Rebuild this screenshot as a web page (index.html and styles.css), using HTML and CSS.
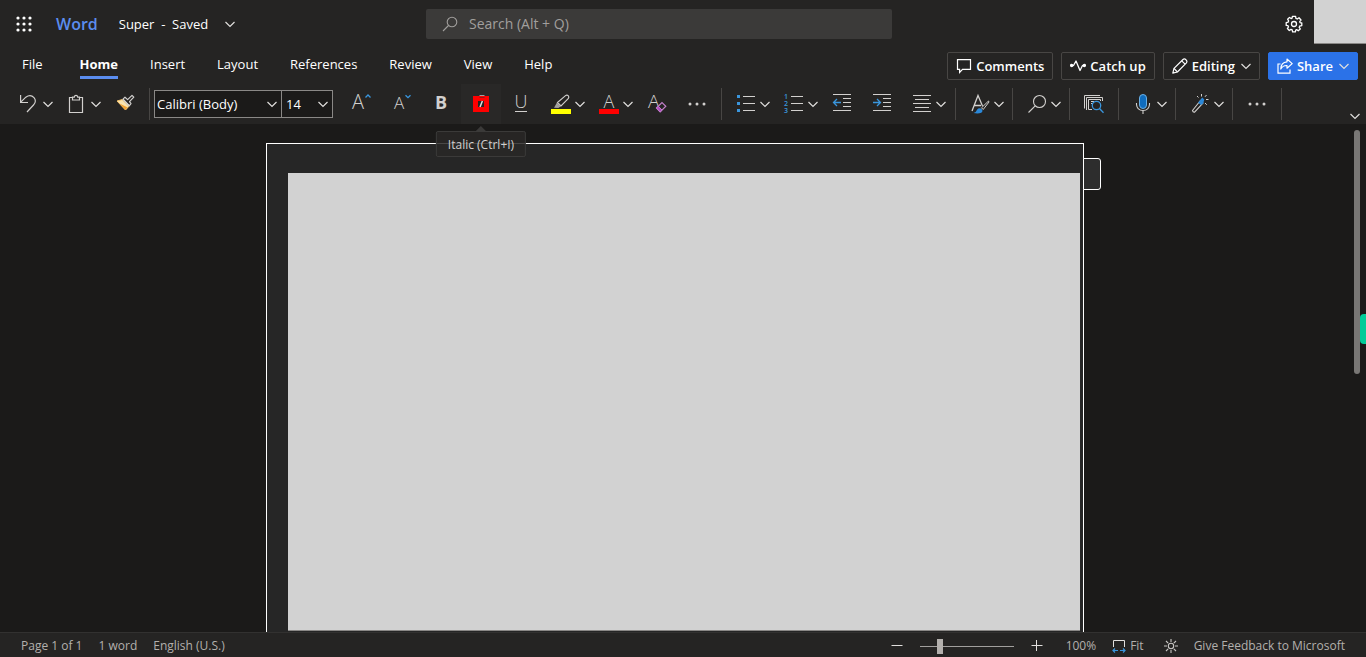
FILE: index.html
```html
<!DOCTYPE html>
<html lang="en">
<head>
<meta charset="utf-8">
<title>Super - Word</title>
<link rel="stylesheet" href="styles.css">
</head>
<body>
<svg class="defs" aria-hidden="true">
  <symbol id="chev" viewBox="0 0 10 10"><path d="M0.5 3L5 7.5L9.5 3" fill="none" stroke="currentColor" stroke-width="1.2"/></symbol>
</svg>
<header class="header">
  <div class="titlebar">
    <div class="title-left">
      <button class="launcher" aria-label="App launcher">
        <svg width="16" height="16" fill="#fff"><circle cx="2" cy="2" r="1.6"/><circle cx="8" cy="2" r="1.6"/><circle cx="14" cy="2" r="1.6"/><circle cx="2" cy="8" r="1.6"/><circle cx="8" cy="8" r="1.6"/><circle cx="14" cy="8" r="1.6"/><circle cx="2" cy="14" r="1.6"/><circle cx="8" cy="14" r="1.6"/><circle cx="14" cy="14" r="1.6"/></svg>
      </button>
      <a class="brand" href="#">Word</a>
      <button class="doc-name"><span>Super&nbsp; -&nbsp; Saved</span><svg class="chev"><use href="#chev"/></svg></button>
    </div>
    <label class="search">
      <svg width="16" height="16" fill="none" stroke="#a19f9d" stroke-width="1.1"><circle cx="10" cy="6" r="4.8"/><path d="M6.5 9.5L1 15"/></svg>
      <input type="text" placeholder="Search (Alt + Q)" aria-label="Search">
    </label>
    <div class="title-right">
      <button class="settings" aria-label="Settings">
        <svg width="18" height="18" viewBox="0 0 18 18" fill="none" stroke="#fff" stroke-width="1.3" stroke-linejoin="round"><circle cx="9" cy="9" r="2.5"/><path d="M7.4 1.3H10.6L10.9 3.4L12.3 4L14 2.8L16 5L14.7 6.6L15 7.6L16.8 8V10.6L14.8 11L14.2 12.3L15.3 13.9L13.2 15.8L11.6 14.6L10.7 15L10.4 16.8H7.6L7.2 14.9L6 14.4L4.3 15.5L2.4 13.5L3.5 11.9L3 10.7L1.2 10.4V7.6L3.1 7.2L3.6 5.9L2.6 4.2L4.5 2.4L6.1 3.6L7.1 3.2Z"/></svg>
      </button>
      <div class="avatar"></div>
    </div>
  </div>
  <div class="tabrow">
    <nav class="tabs">
      <a class="tab tab-file" href="#">File</a>
      <a class="tab active" href="#">Home</a>
      <a class="tab" href="#">Insert</a>
      <a class="tab" href="#">Layout</a>
      <a class="tab" href="#">References</a>
      <a class="tab" href="#">Review</a>
      <a class="tab" href="#">View</a>
      <a class="tab" href="#">Help</a>
    </nav>
    <div class="actions">
      <button class="action"><svg width="16" height="16" fill="none" stroke="#fff" stroke-width="1.2"><path d="M1.5 1.6H14.5V11.4H6.5L3.6 14.4V11.4H1.5Z"/></svg>Comments</button>
      <button class="action"><svg width="16" height="16" fill="none" stroke="#fff" stroke-width="1.3" stroke-linejoin="round"><path d="M1 7.5H3.5L6 3L10 12.5L12.5 7.5H15"/><circle cx="1.6" cy="7.5" r="1" fill="#fff"/><circle cx="14.4" cy="7.5" r="1" fill="#fff"/></svg>Catch up</button>
      <button class="action"><svg width="16" height="16" fill="none" stroke="#fff" stroke-width="1.2" stroke-linejoin="round"><path d="M0.8 15.2L2 10.4L11 1.5Q12.4 0.3 14 1.8Q15.6 3.4 14.4 4.9L5.4 14Z"/><path d="M9.7 2.8L13.1 6.2M2 10.4L5.4 14"/></svg>Editing<svg class="chev"><use href="#chev"/></svg></button>
      <button class="action share"><svg width="16" height="16" fill="none" stroke="#fff" stroke-width="1.2"><path d="M3.5 6H1V15.2H13V11.5"/><path d="M10 1L15.2 5.6L10 10.2V7.5Q6 7.2 3.8 11Q4 4.2 10 3.8Z" stroke-linejoin="round"/></svg>Share<svg class="chev"><use href="#chev"/></svg></button>
    </div>
  </div>
  <div class="toolbar">
    <button class="tool split" aria-label="Undo"><svg class="ico" fill="none" stroke="#d2d0ce" stroke-width="1.2"><path d="M1.6 1V8.5H9M1.8 8.2L6.8 3.2Q11.5 0 15 3.6Q18 7.2 14.5 11L8 18"/></svg><svg class="chev"><use href="#chev"/></svg></button>
    <button class="tool split" aria-label="Paste"><svg class="ico" fill="none" stroke="#d2d0ce" stroke-width="1.2"><path d="M5 3.5H2.5V18.5H15.5V3.5H13M5.5 6V3.2H7.3Q7.5 1.3 9 1.3Q10.5 1.3 10.7 3.2H12.5V6Z"/></svg><svg class="chev"><use href="#chev"/></svg></button>
    <button class="tool" aria-label="Format painter"><svg class="ico" fill="none" stroke-linejoin="round"><path d="M2 7L7.2 5.6L14 12.2L10.5 16Z" fill="#f8e3b0" stroke="#f5c36b"/><path d="M4.5 9.5L12.2 13.2L10.5 16Z" fill="#f0a030"/><path d="M8 5.2L10 3.2L12.6 5.6L17 1.4L18.8 3.2L14.5 7.6L16 9.6L14.2 11.8Z" fill="#252423" stroke="#d2d0ce" stroke-width="1.2"/><path d="M8 5.4L14.3 11.7" stroke="#d2d0ce" stroke-width="1.2"/></svg></button>
    <i class="sep"></i>
    <div class="combos">
      <div class="combo combo-font"><select aria-label="Font"><option>Calibri (Body)</option></select><svg class="chev"><use href="#chev"/></svg></div>
      <div class="combo combo-size"><select aria-label="Font size"><option>14</option></select><svg class="chev"><use href="#chev"/></svg></div>
    </div>
    <button class="tool" aria-label="Increase font size"><svg class="ico"><text class="glyph" x="1" y="15" font-size="20">A</text><path d="M14.5 3.5L17 1L19.5 3.5" fill="none" stroke="#3a96dd" stroke-width="1.3"/></svg></button>
    <button class="tool" aria-label="Decrease font size"><svg class="ico"><text class="glyph" x="3" y="15" font-size="17">A</text><path d="M14.5 1.2L17 3.7L19.5 1.2" fill="none" stroke="#3a96dd" stroke-width="1.3"/></svg></button>
    <button class="tool" aria-label="Bold"><svg class="ico"><text class="glyph bold" x="10" y="15" text-anchor="middle">B</text></svg></button>
    <button class="tool hovered" aria-label="Italic">
      <svg class="ico"><rect x="2" y="2" width="16" height="16" fill="#f00"/><path d="M8.5 1.5H13.5" stroke="#a19f9d"/><path d="M8.5 3.5H13.5" stroke="#8a1a18"/><rect x="7" y="7" width="6" height="6" fill="#252423"/><path d="M11.4 7L9 13" stroke="#e1dfdd" stroke-width="1.5"/></svg>
      <span class="tooltip" role="tooltip">Italic (Ctrl+I)</span>
    </button>
    <button class="tool" aria-label="Underline"><svg class="ico"><text class="glyph" x="10" y="14" font-size="18" text-anchor="middle">U</text><path d="M4 17.5H16" stroke="#d2d0ce"/></svg></button>
    <button class="tool split" aria-label="Highlight"><svg class="ico" fill="none"><path d="M6.5 8.5L14.5 1.6Q16 0.5 17.2 1.7Q18.4 3 17.4 4.4L10 12Z" stroke="#d2d0ce" stroke-width="1.1"/><path d="M6 8.6L10 12.3L7.4 14L3 13.8Z" fill="#a19f9d"/><path d="M0 15H20V20H0Z" fill="#ff0"/></svg><svg class="chev"><use href="#chev"/></svg></button>
    <button class="tool split" aria-label="Font color"><svg class="ico"><text class="glyph" x="10" y="14" font-size="18" text-anchor="middle">A</text><path d="M0 15H20V20H0Z" fill="red"/></svg><svg class="chev"><use href="#chev"/></svg></button>
    <button class="tool" aria-label="Clear formatting"><svg class="ico"><text class="glyph" x="1" y="14" font-size="19">A</text><path d="M9.5 14L15 8.5L18.8 12.2L13.2 18Z" fill="#252423" stroke="#c27fc9" stroke-width="1.2"/><path d="M9.5 14L11.3 12.2L15 16L13.2 18Z" fill="#b146c2" stroke="#c27fc9"/></svg></button>
    <button class="tool" aria-label="More font options"><svg class="ico" fill="#d2d0ce"><circle cx="3" cy="10" r="1.5"/><circle cx="10" cy="10" r="1.5"/><circle cx="17" cy="10" r="1.5"/></svg></button>
    <i class="sep"></i>
    <button class="tool split" aria-label="Bullets"><svg class="ico"><path d="M1 1h3v3h-3zM1 8h3v3h-3zM1 15h3v3h-3z" fill="#3a96dd"/><path d="M7 2.5H19M7 9.5H19M7 16.5H19" stroke="#d2d0ce"/></svg><svg class="chev"><use href="#chev"/></svg></button>
    <button class="tool split" aria-label="Numbering"><svg class="ico"><text class="num" x="0" y="5">1</text><text class="num" x="0" y="12">2</text><text class="num" x="0" y="19">3</text><path d="M7 2.5H19M7 9.5H19M7 16.5H19" stroke="#d2d0ce"/></svg><svg class="chev"><use href="#chev"/></svg></button>
    <button class="tool" aria-label="Decrease indent"><svg class="ico" fill="none"><path d="M1 0.5H19M11 4.5H19M11 8.5H19M11 12.5H19M1 16.5H19" stroke="#d2d0ce"/><path d="M9 8.5H1.5M5 5L1.5 8.5L5 12" stroke="#3a96dd" stroke-width="1.3"/></svg></button>
    <button class="tool" aria-label="Increase indent"><svg class="ico" fill="none"><path d="M1 0.5H19M11 4.5H19M11 8.5H19M11 12.5H19M1 16.5H19" stroke="#d2d0ce"/><path d="M1 8.5H8.5M5 5L8.5 8.5L5 12" stroke="#3a96dd" stroke-width="1.3"/></svg></button>
    <button class="tool split" aria-label="Align"><svg class="ico"><path d="M1 1.5H19M3 5.5H17M1 9.5H19M3 13.5H17M1 17.5H19" stroke="#d2d0ce"/></svg><svg class="chev"><use href="#chev"/></svg></button>
    <i class="sep sep-wide"></i>
    <button class="tool split" aria-label="Styles"><svg class="ico" fill="none"><path d="M2 17L8 1.5L12.5 12M4 11.5H11" stroke="#d2d0ce" stroke-width="1.3"/><path d="M18.5 7L11.5 13.8L13.2 15.5L19 8Z" stroke="#d2d0ce"/><path d="M3.5 19Q6.5 18 7.2 15.6Q9 13.2 11.6 15Q13.5 17 11.2 18.8Q8 20 3.5 19Z" fill="#2b88d8"/></svg><svg class="chev"><use href="#chev"/></svg></button>
    <i class="sep"></i>
    <button class="tool split" aria-label="Find"><svg class="ico" fill="none" stroke="#d2d0ce" stroke-width="1.1"><circle cx="12.5" cy="7.5" r="6"/><path d="M8.2 11.8L1.5 18.5"/></svg><svg class="chev"><use href="#chev"/></svg></button>
    <i class="sep"></i>
    <button class="tool" aria-label="Reuse files"><svg class="ico" fill="none" stroke="#d2d0ce"><path d="M0.5 14.5V1.5H16M2.5 16V3.5H18.5V7M8 15.5H4.5V5.5H16.5V7"/><path d="M7 7.5H10M7 9.5H9"/><circle cx="12.5" cy="11.5" r="4.2" stroke="#3a96dd" stroke-width="1.3"/><path d="M15.5 14.5L19.5 18.8" stroke="#3a96dd" stroke-width="1.3"/></svg></button>
    <i class="sep"></i>
    <button class="tool split" aria-label="Dictate"><svg class="ico" fill="none"><rect x="6.5" y="0.5" width="7" height="14" rx="3.5" fill="#0f6cbd" stroke="#69afe5"/><path d="M3.5 9V10.5Q4 16.5 10 16.5Q16 16.5 16.5 10.5V9M10 16.5V20" stroke="#d2d0ce" stroke-width="1.1"/></svg><svg class="chev"><use href="#chev"/></svg></button>
    <i class="sep"></i>
    <button class="tool split" aria-label="Designer"><svg class="ico" fill="none"><path d="M2.5 16.5L10.5 6.5L13 9L4.5 18.2Q3 18.5 2.5 16.5Z" stroke="#d2d0ce" stroke-width="1.1"/><path d="M8 8.8L12.2 3.4L14.3 5.5L13.2 9.2L11 11Z" fill="#2b88d8"/><path d="M11.5 0V2.5M7 2L8.5 3.5M16.5 1L15 2.8M16 5.5H18.5M15 9L16.8 10.8" stroke="#d2d0ce"/></svg><svg class="chev"><use href="#chev"/></svg></button>
    <i class="sep"></i>
    <button class="tool" aria-label="More options"><svg class="ico" fill="#d2d0ce"><circle cx="3" cy="10" r="1.5"/><circle cx="10" cy="10" r="1.5"/><circle cx="17" cy="10" r="1.5"/></svg></button>
    <i class="sep"></i>
    <button class="collapse" aria-label="Ribbon display options"><svg class="chev"><use href="#chev"/></svg></button>
  </div>
</header>
<main class="workspace">
  <div class="page">
    <div class="page-body"></div>
    <div class="page-tab"></div>
  </div>
  <div class="scrollbar"></div>
  <div class="side-handle"></div>
</main>
<footer class="status">
  <div class="status-left"><span>Page 1 of 1</span><span>1 word</span><span>English (U.S.)</span></div>
  <div class="status-right">
    <button class="mini" aria-label="Zoom out"><svg width="12" height="12"><path d="M0.5 5.5H11.5" stroke="#e1dfdd"/></svg></button>
    <input class="zoom" type="range" min="0" max="100" value="20" aria-label="Zoom">
    <button class="mini" aria-label="Zoom in"><svg width="12" height="12"><path d="M0.5 5.5H11.5M5.5 0V11" stroke="#e1dfdd"/></svg></button>
    <button class="mini percent">100%</button>
    <button class="mini fit"><svg width="14" height="14" fill="none"><path d="M1.5 8V1.5H12.5V8" stroke="#e1dfdd"/><path d="M1 11.5H6M8 11.5H13M3 9.5L1 11.5L3 13.5M11 9.5L13 11.5L11 13.5" stroke="#3a96dd" stroke-width="1.2"/></svg>Fit</button>
    <button class="mini sun" aria-label="Switch background"><svg width="14" height="14" fill="none" stroke="#c8c6c4" stroke-width="1.1"><circle cx="7" cy="7" r="2.7"/><path d="M7 0V3M7 11V14M0 7H3M11 7H14M2 2L4.2 4.2M9.8 9.8L12 12M12 2L9.8 4.2M4.2 9.8L2 12"/></svg></button>
    <a class="feedback" href="#">Give Feedback to Microsoft</a>
  </div>
</footer>
</body>
</html>
```
FILE: styles.css
```css
* { box-sizing: border-box; }
body {
  margin: 0;
  height: 100vh;
  display: flex;
  flex-direction: column;
  overflow: hidden;
  background: #1b1a19;
  color: #fff;
  font: 13px/20px "Segoe UI", "Open Sans", "Noto Sans", sans-serif;
}
button, input, select { font: inherit; color: inherit; }
button { border: 0; padding: 0; background: none; }
a { color: inherit; text-decoration: none; }
svg { display: block; flex: none; }
.defs { position: absolute; width: 0; height: 0; }
.chev { width: 10px; height: 10px; color: #e1dfdd; }
.header { background: #252423; position: relative; z-index: 1; }

.titlebar {
  display: grid;
  grid-template-columns: 426fr 466fr 474fr;
  height: 48px;
  align-items: center;
}
.title-left { display: flex; align-items: center; padding-left: 16px; }
.brand { margin-left: 24px; color: #5b8def; font-size: 16px; font-weight: 600; }
.doc-name { display: flex; align-items: center; gap: 17px; margin-left: 21px; }
.search {
  display: flex;
  align-items: center;
  gap: 11px;
  height: 30px;
  padding: 0 16px;
  background: #3b3a39;
  border-radius: 2px;
}
.search input { flex: 1; min-width: 0; padding: 0; border: 0; outline: 0; background: none; font-size: 14px; }
.search input::placeholder { color: #a19f9d; opacity: 1; }
.title-right { display: flex; justify-content: flex-end; align-self: stretch; align-items: center; }
.settings { margin-right: 11px; }
.avatar { align-self: flex-start; width: 52px; height: 44px; background: #d2d2d2; border-bottom: 1px solid #8a8886; }

.tabrow { display: flex; justify-content: space-between; height: 36px; padding: 0 8px 0 22px; }
.tabs { display: flex; gap: 32px; align-items: flex-start; padding-top: 6px; }
.tab { padding-bottom: 2px; border-bottom: 3px solid transparent; }
.tab-file { margin-right: 5px; }
.tab.active { font-weight: 700; border-color: #5b8def; }
.actions { display: flex; gap: 8px; padding-top: 4px; }
.action {
  display: flex;
  align-items: center;
  gap: 4px;
  height: 28px;
  padding: 0 8px;
  border: 1px solid #484644;
  border-radius: 2px;
  font-weight: 600;
}
.action .chev { margin-left: 2px; }
.share { background: #2b72e8; border-color: #2b72e8; }

.toolbar { display: flex; align-items: stretch; height: 40px; padding: 0 6px 0 9px; }
.tool { position: relative; display: flex; align-items: center; justify-content: center; width: 40px; }
.split { justify-content: flex-start; gap: 4px; width: 48px; padding-left: 10px; }
.ico { width: 20px; height: 20px; overflow: visible; }
.hovered { background: #292827; }
.glyph { fill: #d2d0ce; font-family: "Segoe UI", "Open Sans", "Noto Sans", sans-serif; font-weight: 300; }
.num { fill: #3a96dd; font-size: 7px; font-weight: 600; }
.bold { font-size: 18px; font-weight: 700; }
.sep { width: 1px; height: 32px; margin: 4px 4px 0; background: #484644; }
.sep-wide { margin-left: 5px; }
.combos { display: flex; align-items: center; margin-right: 8px; }
.combo { display: flex; align-items: center; height: 28px; border: 1px solid #8a8886; background: #1b1a19; }
.combo select {
  width: 100%;
  height: 26px;
  padding: 0 22px 0 2px;
  border: 0;
  outline: 0;
  appearance: none;
  background: none;
}
.combo .chev { margin-left: -14px; margin-right: 3px; pointer-events: none; }
.combo-font { width: 128px; }
.combo-size { width: 52px; margin-left: -1px; }
.combo-size select { padding-left: 4px; }
.collapse { display: flex; margin-left: auto; align-self: flex-end; padding-bottom: 3px; }

.tooltip {
  position: absolute;
  top: 47px;
  left: 50%;
  transform: translateX(-50%);
  padding: 3px 11px 1px;
  border: 1px solid #3b3a39;
  border-radius: 2px;
  background: rgba(41, 40, 39, .85);
  color: #d2d0ce;
  font-size: 12px;
  line-height: 20px;
  white-space: nowrap;
}
.tooltip::before {
  content: "";
  position: absolute;
  top: -6px;
  left: 50%;
  margin-left: -6px;
  border: solid transparent;
  border-width: 0 6px 6px;
  border-bottom-color: #3b3a39;
}

.workspace { position: relative; flex: 1; min-height: 0; display: flex; justify-content: center; padding: 19px 16px 0 0; }
.page {
  position: relative;
  display: flex;
  width: 100%;
  max-width: 818px;
  padding: 29px 3px 1px 21px;
  border: 1px solid #fff;
  border-bottom: 0;
  background: #262626;
}
.page-body { flex: 1; background: #d2d2d2; border-bottom: 1px solid #8a8886; }
.page-tab {
  position: absolute;
  left: 100%;
  top: 14px;
  width: 18px;
  height: 32px;
  border: 1px solid #fff;
  border-radius: 0 3px 3px 0;
  background: #2d2d2d;
}
.scrollbar { position: absolute; right: 6px; top: 6px; width: 6px; height: 48%; border-radius: 3px; background: #797775; }
.side-handle { position: absolute; right: 0; top: 190px; width: 6px; height: 30px; border-radius: 4px 0 0 4px; background: #00cc99; }

.status {
  display: flex;
  justify-content: space-between;
  align-items: center;
  height: 25px;
  padding: 2px 21px 0;
  border-top: 1px solid #323130;
  background: #252423;
  color: #b3b0ad;
  font-size: 12px;
}
.status-left { display: flex; gap: 16px; }
.status-right { display: flex; align-items: center; }
.mini { display: flex; align-items: center; }
.zoom { appearance: none; width: 94px; height: 16px; margin: 0 17px; background: none; }
.zoom::-webkit-slider-runnable-track { height: 1px; background: #a19f9d; }
.zoom::-webkit-slider-thumb { appearance: none; width: 6px; height: 15px; margin-top: -7px; background: #b3b0ad; }
.percent { margin-left: 23px; }
.fit { gap: 4px; margin-left: 16px; }
.sun { margin: 0 16px 0 20px; }
```
